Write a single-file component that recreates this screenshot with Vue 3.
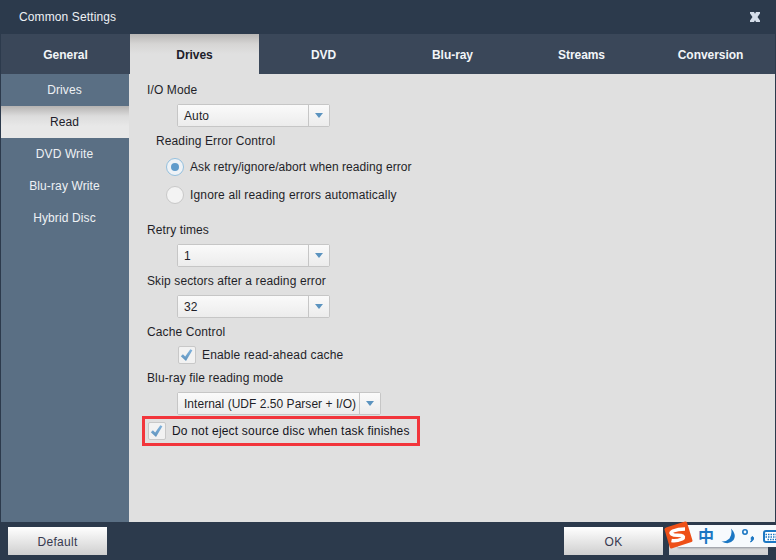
<script setup>
const tabs = ['General', 'Drives', 'DVD', 'Blu-ray', 'Streams', 'Conversion']
const side = ['Drives', 'Read', 'DVD Write', 'Blu-ray Write', 'Hybrid Disc']
</script>

<template>
  <div class="win">
    <header class="title">
      <span>Common Settings</span>
      <svg class="close" width="12" height="10" viewBox="0 0 12 10"><path d="M1 0H5L6 1.800L7 0H11V1.500L8.500 5L11 8.500V10H7L6 8.200L5 10H1V8.500L3.500 5L1 1.500Z" fill="#d5deea"/></svg>
    </header>
    <nav class="tabs">
      <div v-for="t in tabs" :key="t" class="tab" :class="{ on: t === 'Drives' }">{{ t }}</div>
    </nav>
    <div class="body">
      <aside class="side">
        <div v-for="s in side" :key="s" class="item" :class="{ sel: s === 'Drives', act: s === 'Read' }">{{ s }}</div>
      </aside>
      <main class="main">
        <div class="label">I/O Mode</div>
        <div class="combo c1"><span class="val">Auto</span><span class="arrow"><i></i></span></div>
        <div class="label group">Reading Error Control</div>
        <div class="radio r1"><span class="dot on"></span>Ask retry/ignore/abort when reading error</div>
        <div class="radio r2"><span class="dot"></span>Ignore all reading errors automatically</div>
        <div class="label l2">Retry times</div>
        <div class="combo c2"><span class="val">1</span><span class="arrow"><i></i></span></div>
        <div class="label l3">Skip sectors after a reading error</div>
        <div class="combo c2"><span class="val">32</span><span class="arrow"><i></i></span></div>
        <div class="label l3">Cache Control</div>
        <div class="check c3">
          <span class="box"><svg width="16" height="16" viewBox="0 0 16 16"><defs><linearGradient id="ck1" x1="0" y1="0" x2="0" y2="1"><stop offset="0" stop-color="#7fb2dc"/><stop offset="1" stop-color="#5f93bd"/></linearGradient></defs><path d="M1.800 9.300L3.900 7.300L6.200 9.600L11.300 2.300L13.400 3.300L7 14Z" fill="url(#ck1)"/></svg></span>
          Enable read-ahead cache
        </div>
        <div class="label l4">Blu-ray file reading mode</div>
        <div class="combo wide"><span class="val">Internal (UDF 2.50 Parser + I/O)</span><span class="arrow"><i></i></span></div>
        <div class="check hl">
          <span class="box"><svg width="16" height="16" viewBox="0 0 16 16"><path d="M1.800 9.300L3.900 7.300L6.200 9.600L11.300 2.300L13.400 3.300L7 14Z" fill="url(#ck1)"/></svg></span>
          <span class="hltext">Do not eject source disc when task finishes</span>
        </div>
      </main>
    </div>
    <footer class="foot">
      <button class="btn">Default</button>
      <div class="right">
        <button class="btn">OK</button>
        <button class="btn"></button>
      </div>
    </footer>
    <div class="ime">
      <span class="zh">中</span>
      <svg class="moon" width="16" height="17" viewBox="0 0 16 17"><path d="M10 0.500Q16 7 12.500 12Q8 17.500 0.500 13.500Q5 14 8.500 10.500Q11.500 6 10 0.500Z" fill="#1c77c3"/></svg>
      <svg class="punc" width="14" height="15" viewBox="0 0 14 15"><circle cx="3" cy="4" r="2.200" fill="none" stroke="#1c77c3" stroke-width="1.600"/><path d="M10.500 8.500Q12 9 11.500 11Q11 13 8.500 14Q9.800 12.500 9.300 11.500Q8.500 9 10.500 8.500Z" fill="#1c77c3" stroke="#1c77c3"/></svg>
      <svg class="kbd" width="14" height="13" viewBox="0 0 14 13"><rect x="1" y="1" width="20" height="11" rx="2" fill="#fff" stroke="#1c77c3" stroke-width="2"/><path d="M2.500 4.500H14M2.500 7H14M4.500 9.500H14" stroke="#1c77c3" stroke-width="1.300" stroke-dasharray="1.500 1"/></svg>
    </div>
    <svg class="logo" width="29" height="28" viewBox="0 0 29 28">
      <path d="M2 6.500L21 0.500Q22.500 0.200 23 1.500L28.500 19.500Q28.500 20.700 27.500 21L7.500 27.500Q6.200 27.700 5.800 26.500L0.500 8.500Q0.500 7 2 6.500Z" fill="#ee5018"/>
      <path d="M21 8Q14 8 9 10Q4.500 12.500 10 14L17 14.500Q21.500 15.500 18 18Q12 20.500 7.500 19.500" stroke="#fff" stroke-width="3.400" fill="none"/>
    </svg>
  </div>
</template>

<style scoped>
.win {
  position: relative;
  width: 776px;
  height: 560px;
  overflow: hidden;
  background: #2c3a4c;
  font-family: "Liberation Sans", Arial, sans-serif;
  font-size: 12px;
  letter-spacing: .12px;
  color: #1f1f28;
  display: flex;
  flex-direction: column;
}
.title {
  height: 33px;
  flex: none;
  display: flex;
  align-items: center;
  justify-content: space-between;
  padding: 0 15px 1px 19px;
  color: #eef1f4;
}
.close { margin-top: 1px; }
.tabs {
  height: 40px;
  flex: none;
  margin: 0 1px;
  display: flex;
  background: #3a4759;
}
.tab {
  width: 129px;
  flex: none;
  display: flex;
  align-items: center;
  justify-content: center;
  padding-top: 2px;
  color: #f2f5f8;
  font-weight: 700;
  letter-spacing: -.05px;
}
.tab.on {
  background: linear-gradient(#b8b6b5, #d6d5d4 10px, #e0e0e0 20px);
  color: #20202a;
  padding-top: 1px;
}
.body {
  flex: 1;
  min-height: 0;
  margin: 0 1px;
  display: flex;
}
.side {
  width: 128px;
  flex: none;
  background: #5a6f84;
}
.item {
  height: 32px;
  display: flex;
  align-items: center;
  justify-content: center;
  padding-right: 1px;
  box-sizing: border-box;
  color: #eef1f4;
}
.item.act {
  background: linear-gradient(#b5b3b2, #dcdcdc 10px, #e8e8e8 20px);
  color: #20202a;
}
.main {
  flex: 1;
  background: #e0e0e0;
  padding: 9px 0 0 18px;
}
.label { line-height: 15px; }
.combo {
  display: flex;
  width: 153px;
  height: 23px;
  margin: 6px 0 0 30px;
  box-sizing: border-box;
  border: 1px solid #c6c6c6;
  border-radius: 2px;
  background: #f0f0f0;
}
.val {
  flex: 1;
  line-height: 22px;
  padding-left: 6px;
  white-space: nowrap;
  background: linear-gradient(#fafafa, #ececec);
}
.arrow {
  width: 20px;
  flex: none;
  border-left: 1px solid #c6c6c6;
  display: flex;
  align-items: center;
  justify-content: center;
  background: linear-gradient(#fafafa, #ececec);
}
.arrow i {
  width: 0;
  height: 0;
  border-left: 4px solid transparent;
  border-right: 4px solid transparent;
  border-top: 5px solid #5b93bf;
}
.wide { width: 204px; letter-spacing: .03px; }
.group { margin: 7px 0 0 9px; }
.radio {
  display: flex;
  align-items: center;
  height: 18px;
  padding-left: 19px;
}
.r1 { margin-top: 9px; letter-spacing: .07px; }
.r2 { margin-top: 10px; letter-spacing: .15px; }
.dot {
  width: 18px;
  height: 18px;
  margin-right: 6px;
  flex: none;
  box-sizing: border-box;
  border-radius: 50%;
  border: 1px solid #c8c8c8;
  background: #f3f3f3;
  display: flex;
  align-items: center;
  justify-content: center;
}
.dot.on { border-color: #94c0de; background: #eef2f6; }
.dot.on::after {
  content: "";
  width: 8px;
  height: 8px;
  border-radius: 50%;
  background: #5f9bcb;
}
.l2 { margin-top: 19px; }
.l3 { margin-top: 7px; }
.l4 { margin-top: 6px; }
.check {
  display: flex;
  align-items: center;
  letter-spacing: .17px;
}
.c3 { margin: 5px 0 0 31px; height: 20px; }
.box {
  width: 18px;
  height: 18px;
  margin-right: 6px;
  flex: none;
  box-sizing: border-box;
  border: 1px solid #c8c8c8;
  border-radius: 2px;
  background: #f2f2f2;
}
.box svg { display: block; }
.hl {
  width: 278px;
  height: 30px;
  box-sizing: border-box;
  margin: 1px 0 0 -5px;
  padding-left: 3px;
  border: 3px solid #f2353b;
  color: #14141c;
}
.hltext { letter-spacing: .19px; }
.foot {
  height: 38px;
  flex: none;
  display: flex;
  justify-content: space-between;
  padding: 5px 8px;
  box-sizing: border-box;
}
.right { display: flex; gap: 6px; }
.btn {
  width: 99px;
  height: 28px;
  border: 0;
  padding: 2px 0 0;
  font: inherit;
  letter-spacing: .3px;
  color: #37394f;
  background: linear-gradient(#ffffff, #cfcfcf);
}
.ime {
  position: absolute;
  left: 678px;
  top: 525px;
  width: 98px;
  height: 22px;
  background: #f7fafd;
  box-shadow: 0 1px 2px rgba(60, 70, 90, .5);
  color: #1c77c3;
}
.logo { position: absolute; left: 664px; top: 521px; }
.zh { position: absolute; left: 20px; top: 0; font: 700 16px/21px "Noto Sans CJK SC", sans-serif; letter-spacing: 0; }
.moon { position: absolute; left: 43px; top: 3px; }
.punc { position: absolute; left: 64px; top: 3px; }
.kbd { position: absolute; left: 85px; top: 5px; }
</style>

<style>
html, body { margin: 0; background: #2c3a4c; }
</style>
